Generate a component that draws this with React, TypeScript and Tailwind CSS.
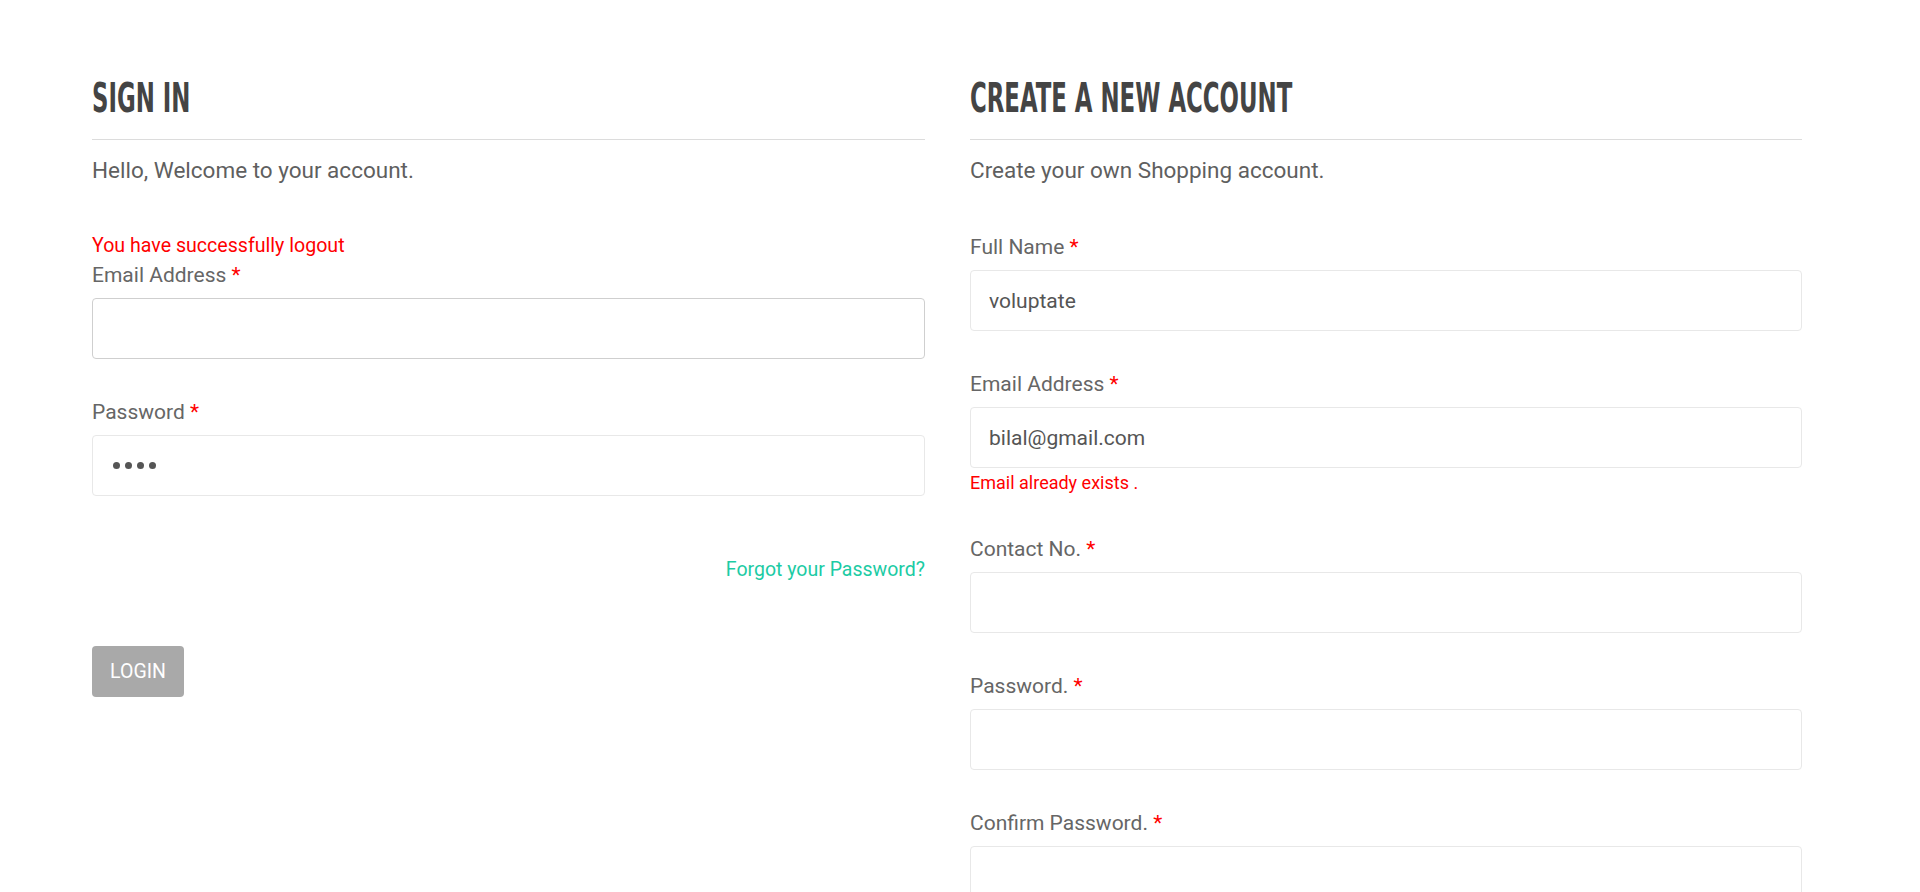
import React from "react";

const Req = () => <span className="text-[#ff0000]"> *</span>;

function Field({
  label,
  value,
  type = "text",
  border = "border-[#e8e8e8]",
  error,
  className = "",
  masked = 0,
}: {
  label: string;
  value?: string;
  type?: string;
  border?: string;
  error?: string;
  className?: string;
  masked?: number;
}) {
  return (
    <div className={className}>
      <label className="block text-[21px] leading-[26px] text-[#666] mb-[10px]">
        {label}
        <Req />
      </label>
      <div className="relative">
        <input
          readOnly
          type={type}
          value={value ?? ""}
          className={`block w-full h-[61px] rounded-[4px] border ${border} bg-white px-[18px] text-[21px] text-[#555] outline-none`}
          style={{ fontFamily: "Roboto, 'Liberation Sans', sans-serif" }}
        />
        {masked > 0 && (
          <div className="pointer-events-none absolute left-[21px] top-0 bottom-0 flex items-center gap-[5px]">
            {Array.from({ length: masked }).map((_, i) => (
              <span key={i} className="block w-[7px] h-[7px] rounded-full bg-[#555]" />
            ))}
          </div>
        )}
      </div>
      {error && (
        <div className="mt-[3px] text-[18px] leading-[24px] text-[#ff0000]">{error}</div>
      )}
    </div>
  );
}

const headingFont = {
  fontFamily: "'Liberation Sans Narrow', 'DejaVu Sans Condensed', 'Liberation Sans', sans-serif",
};

function Heading({ children }: { children: React.ReactNode }) {
  return (
    <div className="pb-[21px] border-b border-[#dcdcdc]">
      <h2
        className="text-[40px] leading-[40px] font-bold text-[#444] uppercase origin-left scale-x-[0.635] whitespace-nowrap"
        style={headingFont}
      >
        {children}
      </h2>
    </div>
  );
}

export default function App() {
  return (
    <div
      className="min-h-screen bg-white pt-[78px] pl-[92px]"
      style={{ fontFamily: "Roboto, 'Liberation Sans', sans-serif" }}
    >
      <div className="flex gap-[45px]">
        {/* Sign in */}
        <div className="w-[833px]">
          <Heading>Sign In</Heading>
          <p className="mt-[15px] text-[22.5px] leading-[30px] text-[#5f5f5f]">
            Hello, Welcome to your account.
          </p>
          <div className="mt-[48px]">
            <div className="text-[19.6px] leading-[26px] text-[#ff0000] mb-[3px]">
              You have successfully logout
            </div>
            <Field label="Email Address" border="border-[#cfcfcf]" />
            <Field label="Password" type="password" masked={4} className="mt-[40px]" />
            <div className="mt-[61px] text-right text-[19.5px] leading-[26px] text-[#1ccba4]">
              Forgot your Password?
            </div>
            <button className="mt-[63px] w-[92px] h-[51px] rounded-[4px] bg-[#a9a9a9] text-white text-[19.5px] uppercase">
              Login
            </button>
          </div>
        </div>

        {/* Create account */}
        <div className="w-[832px]">
          <Heading>Create a new account</Heading>
          <p className="mt-[15px] text-[22.5px] leading-[30px] text-[#5f5f5f]">
            Create your own Shopping account.
          </p>
          <div className="mt-[49px] pb-[60px]">
            <Field label="Full Name" value="voluptate" />
            <Field
              label="Email Address"
              value="bilal@gmail.com"
              error="Email already exists ."
              className="mt-[40px]"
            />
            <Field label="Contact No." className="mt-[41px]" />
            <Field label="Password." type="password" className="mt-[40px]" />
            <Field label="Confirm Password." type="password" className="mt-[40px]" />
          </div>
        </div>
      </div>
    </div>
  );
}
